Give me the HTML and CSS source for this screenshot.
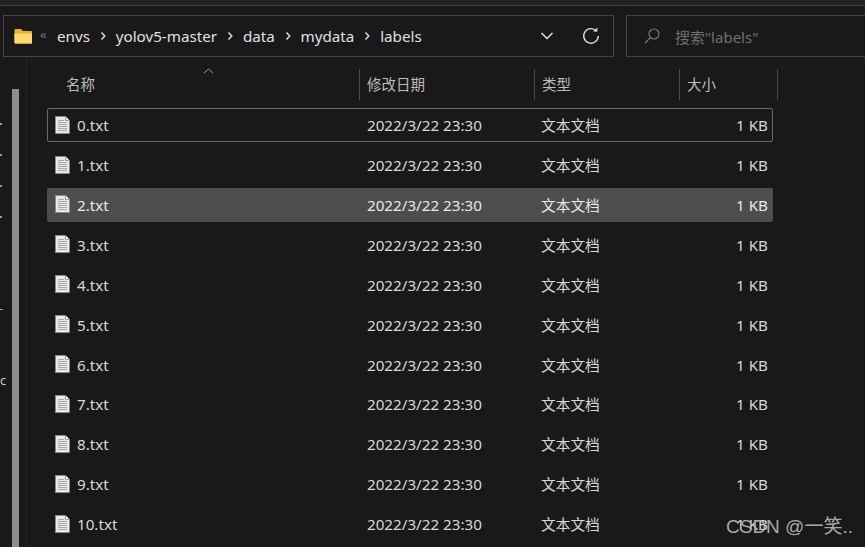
FILE: index.html
```html
<!DOCTYPE html>
<html lang="zh">
<head>
<meta charset="utf-8">
<title>labels</title>
<link rel="stylesheet" href="styles.css">
</head>
<body>
<svg width="0" height="0" class="defs" aria-hidden="true">
  <symbol id="doc" viewBox="0 0 15 18">
    <path d="M.5.5H10.5L14.5 4.500V17.500H.5Z" fill="#e8e8e8" stroke="#8b8b8b"/>
    <path d="M10.500.5V4.500H14.500" fill="#fafafa" stroke="#9a9a9a"/>
    <path d="M3 4.500H9M3 6.500H12M3 8.500H12M3 10.500H12M3 12.500H12M3 14.500H12" stroke="#a9a9a9" stroke-width="1"/>
  </symbol>
  <symbol id="sep" viewBox="0 0 6 10">
    <path d="M1.500 1.500 4.800 5 1.500 8.500" fill="none" stroke="#e2e2e2" stroke-width="1.400"/>
  </symbol>
</svg>
<div class="window">
  <div class="topstrip"></div>
  <div class="toolbar">
    <div class="pathbar">
      <svg class="folder" width="19" height="15" viewBox="0 0 19 15">
        <path d="M.5 1Q.5 0 1.500 0H7L9 2H17.500Q18 2 18 3V14Q18 14.500 17.500 14.500H1.500Q.5 14.500 .5 13.500Z" fill="#e8b52a"/>
        <path d="M.5 4.500H18V14Q18 14.500 17.500 14.500H1.500Q.5 14.500 .5 13.500Z" fill="#fcd96a"/>
      </svg>
      <span class="chev-left">«</span>
      <span class="crumb">envs</span>
      <svg class="sep"><use href="#sep"/></svg>
      <span class="crumb">yolov5-master</span>
      <svg class="sep"><use href="#sep"/></svg>
      <span class="crumb">data</span>
      <svg class="sep"><use href="#sep"/></svg>
      <span class="crumb">mydata</span>
      <svg class="sep"><use href="#sep"/></svg>
      <span class="crumb">labels</span>
      <svg class="down" width="14" height="8" viewBox="0 0 14 8"><path d="M1.500 1 7 6.500 12.500 1" fill="none" stroke="#e2e2e2" stroke-width="1.500"/></svg>
      <svg class="refresh" width="18" height="18" viewBox="0 0 18 18"><path d="M14.600 4.200A7.300 7.300 0 1 0 16.300 9" fill="none" stroke="#dcdcdc" stroke-width="1.400"/><path d="M11 4.600H15.400V.4Z" fill="#dcdcdc"/></svg>
    </div>
    <div class="searchbar">
      <svg class="lens" width="16" height="16" viewBox="0 0 16 16"><circle cx="10" cy="6" r="5" fill="none" stroke="#777" stroke-width="1.200"/><path d="M6.400 9.600 1 15" stroke="#777" stroke-width="1.300"/></svg>
      <span class="search-text">搜索"labels"</span>
    </div>
  </div>
  <div class="main">
    <div class="rail"><div class="thumb"></div></div>
    <div class="rail-clip">
      <i class="tick t1"></i><i class="tick t2"></i><i class="tick t3"></i><i class="tick t4"></i><i class="tick t5"></i>
      <span class="clip-c">c</span>
    </div>
    <div class="content">
      <div class="header">
        <svg class="sort" width="11" height="6" viewBox="0 0 11 6"><path d="M1 5 5.500 1 10 5" fill="none" stroke="#9a9a9a" stroke-width="1"/></svg>
        <div class="hcell hname">名称</div>
        <div class="hcell">修改日期</div>
        <div class="hcell">类型</div>
        <div class="hcell">大小</div>
      </div>
      <div class="rows">
        <div class="row focused"><div class="name"><svg class="doc"><use href="#doc"/></svg>0.txt</div><div>2022/3/22 23:30</div><div class="kind">文本文档</div><div class="size">1 KB</div></div>
        <div class="row"><div class="name"><svg class="doc"><use href="#doc"/></svg>1.txt</div><div>2022/3/22 23:30</div><div class="kind">文本文档</div><div class="size">1 KB</div></div>
        <div class="row hover"><div class="name"><svg class="doc"><use href="#doc"/></svg>2.txt</div><div>2022/3/22 23:30</div><div class="kind">文本文档</div><div class="size">1 KB</div></div>
        <div class="row"><div class="name"><svg class="doc"><use href="#doc"/></svg>3.txt</div><div>2022/3/22 23:30</div><div class="kind">文本文档</div><div class="size">1 KB</div></div>
        <div class="row"><div class="name"><svg class="doc"><use href="#doc"/></svg>4.txt</div><div>2022/3/22 23:30</div><div class="kind">文本文档</div><div class="size">1 KB</div></div>
        <div class="row"><div class="name"><svg class="doc"><use href="#doc"/></svg>5.txt</div><div>2022/3/22 23:30</div><div class="kind">文本文档</div><div class="size">1 KB</div></div>
        <div class="row"><div class="name"><svg class="doc"><use href="#doc"/></svg>6.txt</div><div>2022/3/22 23:30</div><div class="kind">文本文档</div><div class="size">1 KB</div></div>
        <div class="row"><div class="name"><svg class="doc"><use href="#doc"/></svg>7.txt</div><div>2022/3/22 23:30</div><div class="kind">文本文档</div><div class="size">1 KB</div></div>
        <div class="row"><div class="name"><svg class="doc"><use href="#doc"/></svg>8.txt</div><div>2022/3/22 23:30</div><div class="kind">文本文档</div><div class="size">1 KB</div></div>
        <div class="row"><div class="name"><svg class="doc"><use href="#doc"/></svg>9.txt</div><div>2022/3/22 23:30</div><div class="kind">文本文档</div><div class="size">1 KB</div></div>
        <div class="row"><div class="name"><svg class="doc"><use href="#doc"/></svg>10.txt</div><div>2022/3/22 23:30</div><div class="kind">文本文档</div><div class="size">1 KB</div></div>
      </div>
    </div>
  </div>
  <div class="watermark">CSDN @一笑..</div>
</div>
</body>
</html>
```
FILE: styles.css
```css
* { box-sizing: border-box; }
html, body { margin: 0; height: 100%; }
body { background: #191919; overflow: hidden; }
.defs { position: absolute; }
.window {
  position: relative;
  width: 865px;
  height: 547px;
  overflow: hidden;
  background: #191919;
  color: #dcdcdc;
  font-family: "Noto Sans", "Noto Sans CJK SC", sans-serif;
  font-size: 15.2px;
  display: flex;
  flex-direction: column;
}
.topstrip {
  height: 6px;
  background: #1e2126;
  border-bottom: 1px solid #3d3d3d;
  flex: none;
}
.toolbar {
  flex: none;
  display: flex;
  gap: 12px;
  height: 42px;
  margin-top: 9px;
  padding-left: 3px;
}
.pathbar {
  width: 611px;
  border: 1px solid #454545;
  display: flex;
  align-items: center;
  padding-left: 10px;
  color: #e0e0e0;
}
.folder { flex: none; margin-right: 7px; }
.chev-left { color: #777; font-size: 13px; margin-right: 9px; width: 8px; line-height: 1; margin-top: -3px; }
.crumb { white-space: nowrap; font-size: 15.2px; }
.sep { width: 6px; height: 10px; margin: 0 9.900px; flex: none; }
.down { margin-left: auto; margin-right: 28px; flex: none; }
.refresh { margin-right: 13px; flex: none; }
.searchbar {
  flex: 1;
  border: 1px solid #454545;
  border-right: none;
  display: flex;
  align-items: center;
  padding-left: 17px;
  color: #6f6f6f;
}
.lens { margin-right: 15px; flex: none; }
.search-text { font-size: 15px; }
.main {
  flex: 1;
  display: flex;
  position: relative;
  min-height: 0;
}
.rail { width: 27px; flex: none; padding: 32px 0 0 12px; border-right: 1px solid #232323; }
.thumb { width: 7px; height: 470px; background: #8e8e8e; }
.rail-clip { position: absolute; inset: 0 auto 0 0; width: 6px; overflow: hidden; }
.tick { position: absolute; left: 0; width: 2px; height: 2px; background: #9a9a9a; }
.t1 { top: 66px; }
.t2 { top: 97px; }
.t3 { top: 128px; }
.t4 { top: 159px; }
.t5 { top: 252px; width: 3px; height: 1px; }
.clip-c { position: absolute; left: 0; top: 313px; font-size: 13px; line-height: 20px; color: #c8c8c8; }
.content { flex: 1; min-width: 0; }
.header {
  position: relative;
  display: grid;
  grid-template-columns: 333px 175px 145px 98px;
  height: 31px;
  margin-top: 12px;
  color: #bdbdbd;
  font-size: 14.500px;
}
.sort { position: absolute; left: 176px; top: -1px; }
.hcell {
  border-right: 1px solid #4a4a4a;
  padding-left: 7px;
  line-height: 30px;
  white-space: nowrap;
}
.hname { padding-left: 39px; }
.rows {
  display: flex;
  flex-direction: column;
  gap: 5.900px;
  padding: 8.180px 0 0 20px;
}
.row {
  flex: none;
  width: 726px;
  height: 34px;
  display: grid;
  grid-template-columns: 319px 174px 145px 1fr;
  align-items: center;
  border: 1px solid transparent;
  border-radius: 2px;
  color: #d8d8d8;
  white-space: nowrap;
}
.row.focused { border-color: #6a6a6a; }
.row.hover { background: #4d4d4d; color: #e8e8e8; }
.name { display: flex; align-items: center; padding-left: 7px; gap: 7px; }
.doc { width: 15px; height: 18px; flex: none; margin-top: -1px; }
.kind { font-size: 14.700px; margin-top: -1px; }
.size { text-align: right; padding-right: 4px; }
.watermark {
  position: absolute;
  left: 726px;
  top: 515px;
  font-family: "Liberation Sans", "Noto Sans CJK SC", sans-serif;
  font-size: 19px;
  line-height: 24px;
  color: #a9a9a9;
  white-space: nowrap;
}
```
